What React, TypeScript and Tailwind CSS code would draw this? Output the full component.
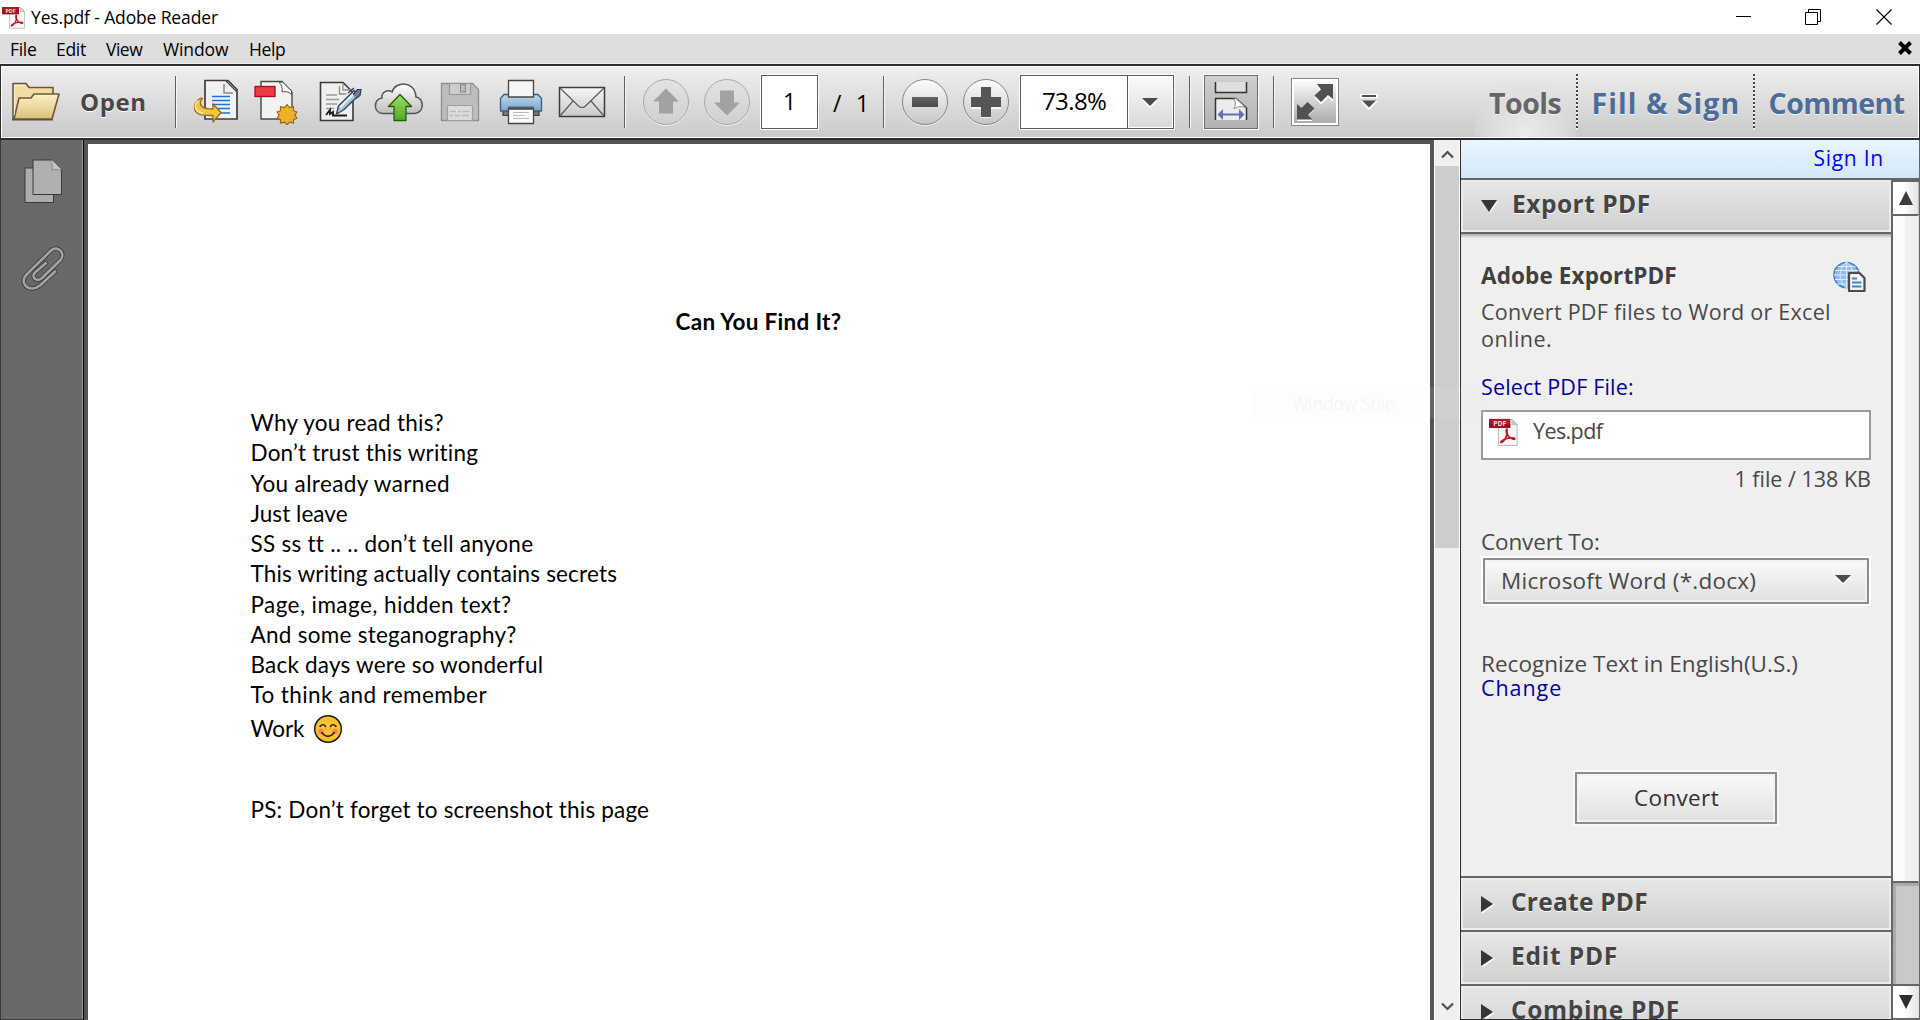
import type { ReactNode } from "react";

function PdfIcon({ width, height }: { width: number; height: number }) {
  return (
    <svg width={width} height={height} viewBox="0 0 24 23">
      <path d="M7.5 1.5h11l4 4v16.8H7.5z" fill="#f6f6f6" stroke="#b9b9b9" strokeWidth="0.8" />
      <path d="M18.3 1.4v4.3h4.3z" fill="#c9c9c9" stroke="#aaa" strokeWidth="0.5" />
      <rect x="0" y="1" width="17" height="7.2" fill="#a81c2a" />
      <path d="M0 5h17v3.2H0z" fill="#8c1622" />
      <text x="3.4" y="6.6" fontSize="5.4" fontWeight="700" fill="#f5dadd" fontFamily="Open Sans, sans-serif">PDF</text>
      <path
        d="M14.3 9.2c-.9.1-.7 2.600.1 4.200-.9 2.700-3 5.900-4.600 6.500-.9.300-.8-.8 2.300-2.500 2.700-1.100 6.300-1.500 8.200-1 .9.400.3 1.200-.9.900-1.800-.5-4.400-2.400-5-5.200-.2-1.300.4-2.900-.1-2.900z"
        fill="none"
        stroke="#c01927"
        strokeWidth="1.3"
      />
    </svg>
  );
}

function Separator({ className }: { className: string }) {
  return <div className={`h-[52px] w-[2px] shrink-0 border-l border-r border-l-[#5e5e5e] border-r-[#f7f7f7] ${className}`} />;
}

function FolderIcon() {
  return (
    <svg width="50" height="42" viewBox="0 0 50 42">
      <defs>
        <linearGradient id="fold" x1="0" y1="0" x2="0" y2="1">
          <stop offset="0" stopColor="#fdf1c6" />
          <stop offset="1" stopColor="#dcc07c" />
        </linearGradient>
      </defs>
      <path d="M2 38V2.500h13l3 4h24v8" fill="#f0dca4" stroke="#665a3c" strokeWidth="1.600" strokeLinejoin="round" />
      <path d="M3 38L8 17h12l3-4h25l-7 25z" fill="url(#fold)" stroke="#665a3c" strokeWidth="1.600" strokeLinejoin="round" />
      <path d="M3.500 34V4.500h11" fill="none" stroke="#fff7dd" strokeWidth="0.8" />
      <path d="M1 38.800h41" stroke="#5c5238" strokeWidth="1.400" />
    </svg>
  );
}

function ExportIcon() {
  return (
    <svg width="46" height="46" viewBox="0 0 46 46">
      <path d="M12 1.500h23l9 9V40H12z" fill="#f1f1f1" stroke="#3d3d3d" strokeWidth="1.700" />
      <path d="M31 5v9h9" fill="none" stroke="#8b8b8b" strokeWidth="1.500" />
      <path d="M33 2l10.500 10.500" stroke="#444" strokeWidth="1.200" />
      <path d="M19 17.500h18M19 21.500h18M19 25.500h18M25 29.500h12M28 34h9" stroke="#1d73d2" strokeWidth="1.700" />
      <path
        d="M8 19C-.5 23-.5 33 7 35.500c3.500 1.200 8 1 13 1V43l8-9.500-8-8.500v5c-6 0-9-.5-11-2.500-2.500-2.500-2-6 .500-8z"
        fill="#f4c445"
        stroke="#9a6a12"
        strokeWidth="1.300"
        strokeLinejoin="round"
      />
      <path d="M5 21.500C-.5 27 3 33.500 10 34" fill="none" stroke="#fde9a0" strokeWidth="1.500" />
    </svg>
  );
}

function CreateIcon() {
  return (
    <svg width="44" height="46" viewBox="0 0 44 46">
      <path d="M7 2.500h21L38 13v27H7z" fill="#f2f2f2" stroke="#484848" strokeWidth="1.400" />
      <path d="M25 3.500c3 2 3.500 5 3 9.500 4-1 7.500 0 9.500 2.500V12l-9-9z" fill="#fff" stroke="#555" strokeWidth="1" />
      <rect x="1" y="7.500" width="20" height="10" fill="#ee3a44" stroke="#a6101d" strokeWidth="1.300" />
      <path
        d="M33 25.500l2.500 3.200 4-1v4l3.500 1.300-2.200 3.200 2.200 3.100-3.500 1.300v3.600l-4-1.100-2.500 2.700-2.500-2.700-4 1.100v-3.600l-3.500-1.300 2.200-3.100-2.200-3.200 3.500-1.300v-4l4 1z"
        fill="#eeb030"
        stroke="#9b6a10"
        strokeWidth="1.200"
        strokeLinejoin="round"
      />
    </svg>
  );
}

function SignIcon() {
  return (
    <svg width="44" height="42" viewBox="0 0 44 42">
      <path d="M1.500 1.500H24l10 10V39.500h-32.500z" fill="#efefef" stroke="#3a3a3a" strokeWidth="1.600" />
      <path d="M20.500 5v8h7M24 2v7h9" fill="none" stroke="#8d8d8d" strokeWidth="1.300" />
      <path d="M7 14h11M7 18.500h13M7 23h11M7 27.500h8" stroke="#9b9b9b" strokeWidth="1.300" />
      <path d="M7 34l4-5v4l3-2v3.500h14" fill="none" stroke="#1d1d1d" strokeWidth="1.900" />
      <path d="M17.500 33l2-8L35 9.500l5 4.500-15.500 15z" fill="#a9c4da" stroke="#34475a" strokeWidth="1.400" strokeLinejoin="round" />
      <path d="M21 26.500L36 11.500" stroke="#e9f4fc" strokeWidth="2" />
      <path d="M34 13.500l4.500-5 3.500 0-1 6-4 3" fill="#6f8193" stroke="#2d3b49" strokeWidth="1.200" />
      <path d="M29 12l6-5" stroke="#2d3b49" strokeWidth="1.200" />
    </svg>
  );
}

function CloudIcon() {
  return (
    <svg width="50" height="40" viewBox="0 0 50 40">
      <defs>
        <linearGradient id="cloud" x1="0" y1="0" x2="0" y2="1">
          <stop offset="0" stopColor="#fdfdfd" />
          <stop offset="1" stopColor="#bfbfbf" />
        </linearGradient>
        <linearGradient id="green" x1="0" y1="0" x2="0" y2="1">
          <stop offset="0" stopColor="#9be066" />
          <stop offset="1" stopColor="#51a822" />
        </linearGradient>
      </defs>
      <path
        d="M9 31.500C-1 31 -1 17 8 16c-1-6 6-9 10-6C21-1 41-2 42 15c8 1 9 15-1 16.500z"
        fill="url(#cloud)"
        stroke="#555"
        strokeWidth="1.500"
      />
      <path d="M26 12.500l11.500 12h-5.500v14H20v-14h-5.500z" fill="url(#green)" stroke="#245c0c" strokeWidth="1.300" strokeLinejoin="round" />
    </svg>
  );
}

function SaveIcon() {
  return (
    <svg width="40" height="40" viewBox="0 0 40 40">
      <path d="M1.500 1.500h31l6 6v31h-37z" fill="#bdbdbd" stroke="#8f8f8f" strokeWidth="1.300" />
      <path d="M9.500 1.500h21v11h-21z" fill="#cdcdcd" stroke="#969696" strokeWidth="1.200" />
      <rect x="20.500" y="2.500" width="5" height="7.500" fill="#bcbcbc" stroke="#8d8d8d" strokeWidth="1.200" />
      <path d="M7.500 38.500v-15h25v15z" fill="#dcdcdc" stroke="#a0a0a0" strokeWidth="1.200" />
      <path d="M10 29.500h6M18 29.500h3M22.500 29.500h7M10 33.500h3M14.500 33.500h6M22 33.500h7" stroke="#bababa" strokeWidth="1.400" />
    </svg>
  );
}

function PrintIcon() {
  return (
    <svg width="44" height="46" viewBox="0 0 44 46">
      <defs>
        <linearGradient id="prn" x1="0" y1="0" x2="0" y2="1">
          <stop offset="0" stopColor="#bcdaea" />
          <stop offset="1" stopColor="#7ba3cf" />
        </linearGradient>
      </defs>
      <path d="M4 29h36v7.500H4z" fill="#777" stroke="#3d3d3d" strokeWidth="1.200" />
      <path d="M5 15.500h34l3.500 4V32h-41V19.500z" fill="url(#prn)" stroke="#3f5c7c" strokeWidth="1.300" strokeLinejoin="round" />
      <path d="M9.500 1.500h25V18h-25z" fill="#f5f5f5" stroke="#454545" strokeWidth="1.300" />
      <path d="M9 27.500h26V32H9z" fill="#57616c" />
      <path d="M9.500 30h25v14.500h-25z" fill="#fbfbfb" stroke="#454545" strokeWidth="1.300" />
      <path d="M14 33.500h16M14 36.500h12M14 39.500h16" stroke="#b9b9b9" strokeWidth="1.200" />
    </svg>
  );
}

function MailIcon() {
  return (
    <svg width="48" height="32" viewBox="0 0 48 32">
      <defs>
        <linearGradient id="mail" x1="0" y1="0" x2="0" y2="1">
          <stop offset="0" stopColor="#f6f6f6" />
          <stop offset="1" stopColor="#c9c9c9" />
        </linearGradient>
      </defs>
      <rect x="1.500" y="1.500" width="45" height="29" fill="url(#mail)" stroke="#3c3c3c" strokeWidth="1.500" />
      <path d="M2 2l18.500 18q3.500 3 7 0L46 2M2 30l13-15M46 30L33 15" fill="none" stroke="#5c5c5c" strokeWidth="1.200" />
    </svg>
  );
}

function RoundButton({ className, faded, children }: { className: string; faded?: boolean; children: ReactNode }) {
  return (
    <div
      className={`flex size-[46px] shrink-0 items-center justify-center rounded-full border-[1.500px] shadow-[0_1px_0_#f4f4f4] ${
        faded ? "border-[#aaaaaa] bg-linear-to-b from-[#e3e3e3] to-[#cfcfcf]" : "border-[#858585] bg-linear-to-b from-[#fcfcfc] to-[#c6c6c6]"
      } ${className}`}
    >
      {children}
    </div>
  );
}

function ArrowGlyph({ down }: { down?: boolean }) {
  return (
    <svg width="28" height="28" viewBox="0 0 28 28" className={down ? "rotate-180" : ""}>
      <path d="M14 0.500L27 13.500h-6V25.500H7V13.500H1z" fill="#a2a2a2" />
    </svg>
  );
}

function TriangleDown({ className }: { className?: string }) {
  return (
    <svg width="16" height="10" viewBox="0 0 16 10" className={className}>
      <path d="M0 2.500l8 7.500 8-7.500z" fill="#fff" />
      <path d="M0 0h16L8 8z" fill="#4b4b4b" />
    </svg>
  );
}

function Toolbar() {
  return (
    <div className="flex h-[76px] w-full border-y-2 border-[#2e2c2f]">
      <div className="w-px bg-[#2e2c2f]" />
      <div className="flex min-w-0 flex-1 items-center border border-white bg-linear-to-b from-[#efefef] to-[#cacaca]">
        <div className="ml-[9px] flex items-center">
          <FolderIcon />
          <span className="ml-[19px] w-[67px] text-[24px] font-bold tracking-[0.6px] text-[#474747] [text-shadow:0_1px_0_#fff]">Open</span>
        </div>
        <Separator className="ml-[28px]" />
        <div className="ml-[16px] flex h-[46px] items-center">
          <ExportIcon />
          <div className="ml-[15px]"><CreateIcon /></div>
          <div className="ml-[21px]"><SignIcon /></div>
          <div className="ml-[11px]"><CloudIcon /></div>
          <div className="ml-[16px]"><SaveIcon /></div>
          <div className="ml-[19px]"><PrintIcon /></div>
          <div className="ml-[15px]"><MailIcon /></div>
        </div>
        <Separator className="ml-[18px]" />
        <RoundButton faded className="ml-[17px]"><ArrowGlyph /></RoundButton>
        <RoundButton faded className="ml-[15px]"><ArrowGlyph down /></RoundButton>
        <div className="ml-[10px] h-[56px] w-[59px] shrink-0 border border-white">
          <div className="flex h-full items-center justify-center border border-[#5b5b5b] bg-white pb-px text-[23px] text-black">1</div>
        </div>
        <span className="ml-[14px] w-[11px] shrink-0 pt-[2px] text-[23px]">/</span>
        <span className="ml-[12px] w-[14px] shrink-0 pt-[2px] text-[23px]">1</span>
        <Separator className="ml-[13px]" />
        <RoundButton className="ml-[17px]">
          <div className="h-[10px] w-[26px] bg-linear-to-b from-[#656565] to-[#484848]" />
        </RoundButton>
        <RoundButton className="ml-[15px]">
          <svg width="30" height="32" viewBox="0 0 30 32">
            <path d="M10 2h10v10h10v11H20v10H10V23H0V12h10z" fill="#f7f7f7" />
            <path d="M10 1h10v10h10v10H20v10H10V21H0V11h10z" fill="#555" />
          </svg>
        </RoundButton>
        <div className="ml-[10px] h-[56px] w-[156px] shrink-0 border border-white">
          <div className="flex h-full border border-[#5b5b5b] bg-white">
            <div className="flex w-[107px] items-center border-r border-[#5b5b5b] pb-[2px] pl-[21px] text-[24px] tracking-[-0.62px] text-black">73.8%</div>
            <div className="flex flex-1 items-center justify-center border border-white bg-linear-to-b from-[#fafafa] to-[#d9d9d9] pt-px pr-[2px]">
              <TriangleDown />
            </div>
          </div>
        </div>
        <Separator className="ml-[14px]" />
        <div className="ml-[12px] size-[56px] shrink-0 border border-white">
          <div className="flex h-full items-center justify-center border border-[#6b6b6b] bg-linear-to-b from-[#cfcfcf] to-[#b2b2b2]">
            <svg width="34" height="42" viewBox="0 0 34 42" className="-mt-[2px]">
              <path d="M1.500 2v10.500h31V2" fill="#dedede" stroke="#333" strokeWidth="1.500" />
              <path d="M1.500 40V18.500H22L32.500 28v12" fill="#ececec" stroke="#333" strokeWidth="1.500" />
              <path d="M20 19c2 3 1.500 7 0 10 4-3 8-3 12-1L22 18.500z" fill="#fff" stroke="#8d8d8d" strokeWidth="1" />
              <path d="M7 34.500h20" stroke="#5f72b4" strokeWidth="2" />
              <path d="M9 29v11L3.500 34.500zM25 29v11l5.500-5.500z" fill="#5f72b4" />
            </svg>
          </div>
        </div>
        <Separator className="ml-[14px]" />
        <div className="ml-[16px] size-[48px] shrink-0 border border-[#858585] bg-white p-[2px]">
          <div className="flex h-full items-center justify-center bg-linear-to-b from-[#fbfbfb] to-[#ababab]">
            <svg width="38" height="40" viewBox="0 0 38 40">
              <path d="M18.500 14.500l6-6-3.500-5H37v15l-5-3.500-7 6.500zM1 38V22l4.500 4 6-6 7 6.500-6.500 6.500 4.500 5z" fill="#fff" transform="translate(0 1)" />
              <path d="M18.500 13.500l6.500-6-4-5.500H37v15l-5-4-7 7zM1 37.500V22l4.500 4 6-6 7 6.500-6.500 6.500 4.500 4.500z" fill="#515151" />
            </svg>
          </div>
        </div>
        <svg width="18" height="18" viewBox="0 0 18 18" className="ml-[21px] shrink-0">
          <path d="M0 1h18v4H0zM0 8h18L9 17.500z" fill="#fff" />
          <path d="M2 2h14v2H2zM2 7.500h14L9 14.500z" fill="#4f4f4f" />
        </svg>
        <div className="ml-[97px] flex h-full w-[101px] shrink-0 items-center bg-[radial-gradient(ellipse_60px_66px_at_50%_100%,#ebebeb_0%,#e0e0e0_45%,transparent_100%)] pt-[3px] pl-[14px] text-[28.5px] font-bold tracking-[-0.5px] text-[#666666] [text-shadow:0_1px_0_#f4f4f4]">
          Tools
        </div>
        <div className="h-[56px] w-[2px] shrink-0 bg-[repeating-linear-gradient(to_bottom,#444_0_2px,#eee_2px_4px)]" />
        <div className="flex h-full w-[175px] shrink-0 items-center pt-[3px] pl-[13.500px] text-[28.5px] font-bold tracking-[1.06px] whitespace-nowrap text-[#4c6d99] [text-shadow:0_1px_0_#f4f4f4]">
          Fill &amp; Sign
        </div>
        <div className="h-[56px] w-[2px] shrink-0 bg-[repeating-linear-gradient(to_bottom,#444_0_2px,#eee_2px_4px)]" />
        <div className="flex h-full min-w-0 flex-1 items-center pt-[3px] pl-[13.500px] text-[28.5px] font-bold tracking-[-0.5px] whitespace-nowrap text-[#4c6d99] [text-shadow:0_1px_0_#f4f4f4]">
          Comment
        </div>
      </div>
      <div className="w-px bg-[#2e2c2f]" />
    </div>
  );
}

function NavPane() {
  return (
    <div className="flex w-[84px] shrink-0 flex-col items-center border-r border-b border-l border-l-[#3a3838] border-r-black border-b-[#3a3838] bg-[#686868] pt-[19px] shadow-[inset_-1px_0_0_#9b9b9b]">
      <svg width="40" height="46" viewBox="0 0 40 46" className="ml-px">
        <path d="M2 9h28.500v34.500H2z" fill="#acacac" stroke="#393939" strokeWidth="1" />
        <path d="M10 1h19l9.500 9.500V35.500H10z" fill="#b0b0b0" stroke="#393939" strokeWidth="1" />
        <path d="M27.500 1.500c2 3 2 6 1.500 9.500 3.500-1 7-.500 9 1v-2l-8.500-8.500z" fill="#c6c6c6" stroke="#777" strokeWidth="0.800" />
      </svg>
      <svg width="44" height="48" viewBox="0 0 44 48" className="mt-[39px] ml-px">
        <g fill="none" strokeLinecap="round" strokeLinejoin="round">
          <path d="M34 27.500L19 41.500C8 50 -3 39 6 30L30 6.500c7-6 15 3 9.500 9.500L21 34c-6 5-11-1.500-7-5.500L25 19" stroke="#3e3e3e" strokeWidth="4.400" />
          <path d="M34 27.500L19 41.500C8 50 -3 39 6 30L30 6.500c7-6 15 3 9.500 9.500L21 34c-6 5-11-1.500-7-5.500L25 19" stroke="#a3a3a3" strokeWidth="2.600" />
        </g>
      </svg>
    </div>
  );
}

const lines: [string, string][] = [
  ["Why you read this?", "tracking-[0.25px]"],
  ["Don’t trust this writing", "tracking-[0.19px]"],
  ["You already warned", "tracking-[0.37px]"],
  ["Just leave", "tracking-[0.05px]"],
  ["SS ss tt .. .. don’t tell anyone", "tracking-[0.26px]"],
  ["This writing actually contains secrets", "tracking-[0.17px]"],
  ["Page, image, hidden text?", "tracking-[0.42px]"],
  ["And some steganography?", "tracking-[0.27px]"],
  ["Back days were so wonderful", "tracking-[0.2px]"],
  ["To think and remember", "tracking-[0.4px]"],
];

function DocumentPage() {
  return (
    <div className="w-[1350px] shrink-0 border-4 border-b-0 border-[#555555] bg-white">
      <div className="flex h-full flex-col pt-[163px] pl-[162.500px] font-['Lato',sans-serif] text-[22.500px] whitespace-nowrap text-black">
        <h1 className="pl-[425px] text-[22.500px] leading-[30px] font-bold tracking-[0.3px]">Can You Find It?</h1>
        <div className="mt-[71px] leading-[30.25px]">
          {lines.map(([text, tracking]) => (
            <p key={text} className={tracking}>{text}</p>
          ))}
        </div>
        <div className="flex h-[37px] items-center">
          <span className="w-[62px] tracking-[-0.2px]">Work</span>
          <svg width="30" height="30" viewBox="0 0 30 30" className="-mt-px">
            <circle cx="15" cy="15" r="13.300" fill="#fcc02e" stroke="#1d1d1d" strokeWidth="1.500" />
            <circle cx="8" cy="17.500" r="2.800" fill="#f58a5c" />
            <circle cx="22" cy="17.500" r="2.800" fill="#f58a5c" />
            <path d="M7 12.500q2.800-3.800 5.600 0M17.400 12.500q2.800-3.800 5.600 0M8.500 18.500q6.500 7.500 13 0" fill="none" stroke="#2a1b00" strokeWidth="1.300" strokeLinecap="round" />
          </svg>
        </div>
        <p className="mt-[47px] leading-[30px] tracking-[0.18px]">PS: Don’t forget to screenshot this page</p>
      </div>
    </div>
  );
}

function DocScrollbar() {
  return (
    <div className="flex w-[26px] shrink-0 flex-col items-center border-x border-white bg-[#f0f0f0]">
      <div className="flex h-[26px] items-center justify-center pt-[2px]">
        <svg width="13" height="10" viewBox="0 0 13 10"><path d="M1 8.500L6.500 3 12 8.500" fill="none" stroke="#505050" strokeWidth="2.200" /></svg>
      </div>
      <div className="h-[382px] w-full bg-[#cdcdcd]" />
      <div className="flex flex-1 items-end pb-[8px]">
        <svg width="13" height="10" viewBox="0 0 13 10"><path d="M1 1.500L6.500 7 12 1.500" fill="none" stroke="#505050" strokeWidth="2.200" /></svg>
      </div>
    </div>
  );
}

function SectionHeader({ title, open, tracking }: { title: string; open?: boolean; tracking: string }) {
  return (
    <div className="flex h-[52px] shrink-0 items-center border-2 border-[#ececec] bg-linear-to-b from-[#e6e6e6] to-[#d1d1d1]">
      <div className="ml-[18px] flex w-[30px] items-center">
        {open ? (
          <svg width="17" height="14" viewBox="0 0 17 14"><path d="M1 3h16l-8 11z" fill="#f7f7f7" /><path d="M0 1h16L8 13z" fill="#363636" /></svg>
        ) : (
          <svg width="14" height="18" viewBox="0 0 14 18"><path d="M1 18l12-8.500" stroke="#fff" strokeWidth="1.500" /><path d="M0 1v16l12-8z" fill="#363636" /></svg>
        )}
      </div>
      <span className={`pb-[3px] text-[24.500px] font-bold text-[#444] [text-shadow:0_1px_0_#f7f7f7] ${open ? "pl-px" : ""} ${tracking}`}>{title}</span>
    </div>
  );
}

function ToolsPanel() {
  return (
    <div className="flex min-w-0 flex-1 flex-col border-r border-l border-l-[#2c2c2c] border-r-[#666]">
      <div className="h-[40px] shrink-0 border-b-2 border-[#666] bg-linear-to-b from-[#e9f6ff] to-[#d4e7f7] pt-[5px] pr-[35px] text-right text-[21px] leading-[27px] tracking-[0.76px] text-[#0505ee]">
        Sign In
      </div>
      <div className="flex min-h-0 flex-1">
        <div className="flex w-[430px] shrink-0 flex-col overflow-hidden border-b border-[#2c2c2c] whitespace-nowrap">
          <SectionHeader title="Export PDF" open tracking="tracking-[0.5px]" />
          <div className="flex h-[646px] shrink-0 flex-col border-y-2 border-[#666] bg-[#efefef] pr-[20px] pl-[20px] text-[21.5px] text-[#484848] shadow-[inset_0_4px_3px_-2px_#aaa]">
            <div className="mt-[28px] flex h-[36px] items-start justify-between">
              <span className="pt-px text-[22.5px] leading-[26px] font-bold tracking-[0.12px] text-[#404040]">Adobe ExportPDF</span>
              <svg width="34" height="32" viewBox="0 0 34 32" className="-mt-px mr-[4px]">
                <circle cx="13.500" cy="14" r="12.500" fill="#8fbcec" stroke="#4383c6" strokeWidth="1.600" />
                <path d="M2 9.500h23M1 14h25M2 18.500h23M4 23h19M4.500 5.500h18M13.500 1v26M13.500 1C5 8 5 20 13.500 27M13.500 1C22 8 22 20 13.500 27" fill="none" stroke="#dcecfd" strokeWidth="1" />
                <path d="M16 12h10.500l5 5v13H16z" fill="#f3f3f3" stroke="#4c4c4c" strokeWidth="2.200" strokeLinejoin="round" />
                <path d="M19 17.500h5M19 21.500h9.500M19 25.500h9.500" stroke="#3f85cf" strokeWidth="2.200" />
              </svg>
            </div>
            <p className="leading-[27px] tracking-[0.27px]">
              Convert PDF files to Word or Excel
              <br />
              <span className="tracking-[0.46px]">online.</span>
            </p>
            <p className="mt-[22px] leading-[26px] tracking-[0.19px] text-[#0000a0]">Select PDF File:</p>
            <div className="mt-[10px] flex h-[50px] items-start border-2 border-[#999] bg-white pt-[5px] pl-[6px]">
              <PdfIcon width={30} height={30} />
              <span className="pt-px pl-[14px] leading-[25px] tracking-[-0.6px]">Yes.pdf</span>
            </div>
            <p className="mt-[6px] text-right leading-[26px]">1 file / 138 KB</p>
            <p className="mt-[37px] text-[22.5px] leading-[26px] tracking-[-0.14px]">Convert To:</p>
            <div className="mt-px border-2 border-white">
              <div className="flex h-[46px] items-center justify-between border-2 border-[#8c8c8c] bg-linear-to-b from-[#fafafa] to-[#e0e0e0] pr-[16px] pl-[16px] text-[22.5px] tracking-[0.24px] shadow-[inset_0_0_0_2px_#f2f2f2]">
                Microsoft Word (*.docx)
                <TriangleDown className="mb-[2px]" />
              </div>
            </div>
            <p className="mt-[45px] text-[22.5px] leading-[26px] tracking-[0.04px]">Recognize Text in English(U.S.)</p>
            <p className="leading-[21px] tracking-[0.92px] text-[#0000a0]">Change</p>
            <div className="mt-[72px] ml-[92px] w-[206px] border-2 border-[#f8f8f8]">
              <div className="flex h-[52px] items-center justify-center border-2 border-[#8c8c8c] bg-linear-to-b from-[#fafafa] to-[#e0e0e0] pl-px text-[22.5px] tracking-[0.35px] text-[#303030] shadow-[inset_0_0_0_2px_#f2f2f2]">
                Convert
              </div>
            </div>
          </div>
          <SectionHeader title="Create PDF" tracking="tracking-[0.25px]" />
          <div className="h-[2px] shrink-0 bg-[#666]" />
          <SectionHeader title="Edit PDF" tracking="tracking-[0.8px]" />
          <div className="h-[2px] shrink-0 bg-[#666]" />
          <SectionHeader title="Combine PDF" tracking="tracking-[0.65px]" />
        </div>
        <div className="flex min-w-0 flex-1 flex-col border-2 border-r-0 border-[#666] bg-[#c9c9c9]">
          <div className="flex h-[32px] items-center justify-center border-r border-[#bbb] bg-linear-to-r from-white from-40% to-[#e4e4e4] pb-px">
            <svg width="14" height="14" viewBox="0 0 14 14"><path d="M0 14L7 0l7 14z" fill="#3d3d3d" /></svg>
          </div>
          <div className="h-[669px] border-y-2 border-r border-[#666] border-r-[#ddd] bg-linear-to-r from-[#fcfcfc] from-45% to-[#f0f0f0] to-50%" />
          <div className="flex-1 shadow-[inset_3px_3px_1px_#aaa]" />
          <div className="flex h-[34px] items-center justify-center border-t-2 border-[#666] bg-linear-to-r from-white from-40% to-[#e4e4e4]">
            <svg width="14" height="14" viewBox="0 0 14 14"><path d="M0 0h14L7 14z" fill="#2d2d2d" /></svg>
          </div>
        </div>
      </div>
    </div>
  );
}

const menu: [string, string][] = [
  ["File", "w-[46px] tracking-[-0.29px]"],
  ["Edit", "w-[50px] tracking-[-0.28px]"],
  ["View", "w-[57px] tracking-[-0.5px]"],
  ["Window", "w-[86px] tracking-[-0.11px]"],
  ["Help", "w-[46px] tracking-[-0.38px]"],
];

export default function App() {
  return (
    <div className="relative flex h-[1020px] w-[1920px] flex-col overflow-hidden bg-white font-['Open_Sans',sans-serif] text-black">
      <div className="flex h-[34px] shrink-0 items-center text-[17.5px]">
        <div className="ml-[2px]"><PdfIcon width={24} height={23} /></div>
        <span className="ml-[5px] flex-1 tracking-[-0.14px]">Yes.pdf - Adobe Reader</span>
        <svg width="16" height="16" viewBox="0 0 16 16" className="mr-[53px]"><path d="M0 7.500h15" stroke="#000" /></svg>
        <svg width="16" height="16" viewBox="0 0 16 16" className="mr-[55px]"><path d="M.5 3.500h12v12H.5zM3.500 3.500V.5h12v12h-3" fill="none" stroke="#000" /></svg>
        <svg width="16" height="16" viewBox="0 0 16 16" className="mr-[28px]"><path d="M.5.5l15 15M15.500.5l-15 15" stroke="#000" strokeWidth="1.100" /></svg>
      </div>
      <div className="flex h-[30px] shrink-0 items-center border-b border-[#f0f0f0] bg-[#dedede] pt-px pl-[10px] text-[17.5px]">
        {menu.map(([label, cls]) => (
          <span key={label} className={cls}>{label}</span>
        ))}
        <svg width="14" height="14" viewBox="0 0 14 14" className="mr-[8px] mb-[2px] ml-auto"><path d="M1.500 1.500l11 11M12.500 1.500l-11 11" stroke="#000" strokeWidth="4" /></svg>
      </div>
      <Toolbar />
      <div className="flex min-h-0 flex-1">
        <NavPane />
        <DocumentPage />
        <DocScrollbar />
        <ToolsPanel />
      </div>
      <div className="pointer-events-none absolute top-[387px] left-[1250px] h-[31px] w-[236px] bg-[#d5ecf8]/10 pt-px pl-[42px] text-[18px] leading-[31px] tracking-[-0.5px] text-[#808080]/8">
        Window Snip
      </div>
    </div>
  );
}
